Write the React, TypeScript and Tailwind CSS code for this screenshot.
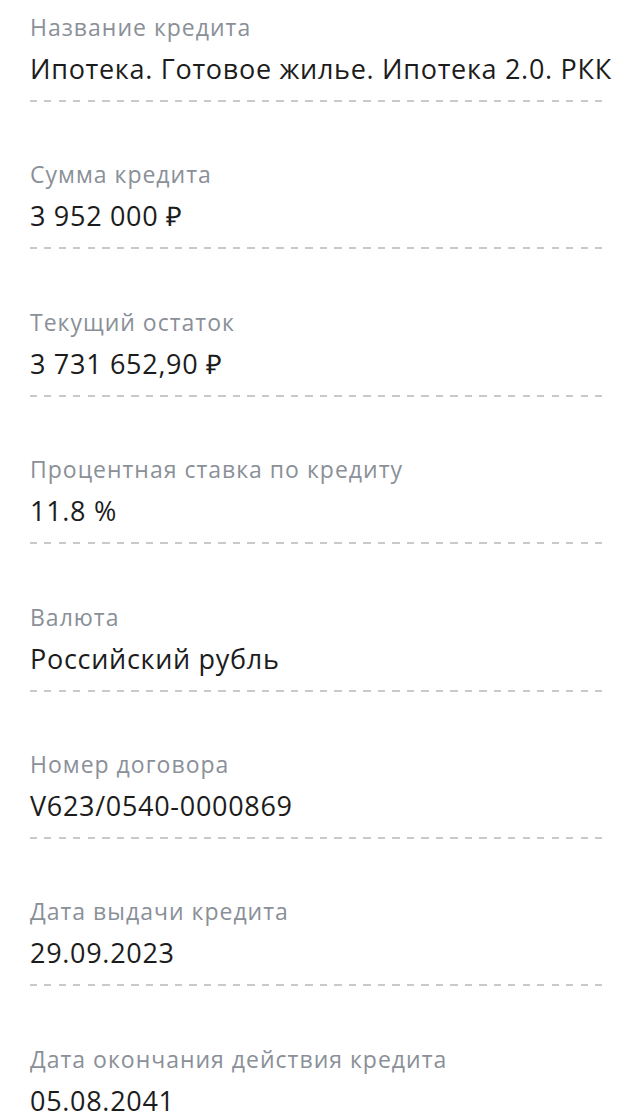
import React from 'react';

interface Row {
  label: string;
  value: string;
}

const rows: Row[] = [
  { label: 'Название кредита', value: 'Ипотека. Готовое жилье. Ипотека 2.0. РКК' },
  { label: 'Сумма кредита', value: '3 952 000 ₽' },
  { label: 'Текущий остаток', value: '3 731 652,90 ₽' },
  { label: 'Процентная ставка по кредиту', value: '11.8 %' },
  { label: 'Валюта', value: 'Российский рубль' },
  { label: 'Номер договора', value: 'V623/0540-0000869' },
  { label: 'Дата выдачи кредита', value: '29.09.2023' },
  { label: 'Дата окончания действия кредита', value: '05.08.2041' },
];

const App: React.FC = () => {
  return (
    <div className="w-[640px] h-[1118px] overflow-hidden bg-white font-['Open_Sans',sans-serif] pl-[30px] pr-[35px] pt-[13px]">
      {rows.map((row, i) => (
        <div key={i} className="mb-[58.4px]">
          <div className="text-[23px] leading-[28px] tracking-[1px] text-[#8a9098]">{row.label}</div>
          <div className="mt-[12px] text-[27px] leading-[32px] tracking-[0.7px] text-[#1c1c1c] whitespace-nowrap">{row.value}</div>
          {i < rows.length - 1 && (
            <div className="mt-[15px] h-[2px] bg-[repeating-linear-gradient(90deg,#c9c9c9_0px,#c9c9c9_7px,transparent_7px,transparent_14.5px)]" />
          )}
        </div>
      ))}
    </div>
  );
};

export default App;
